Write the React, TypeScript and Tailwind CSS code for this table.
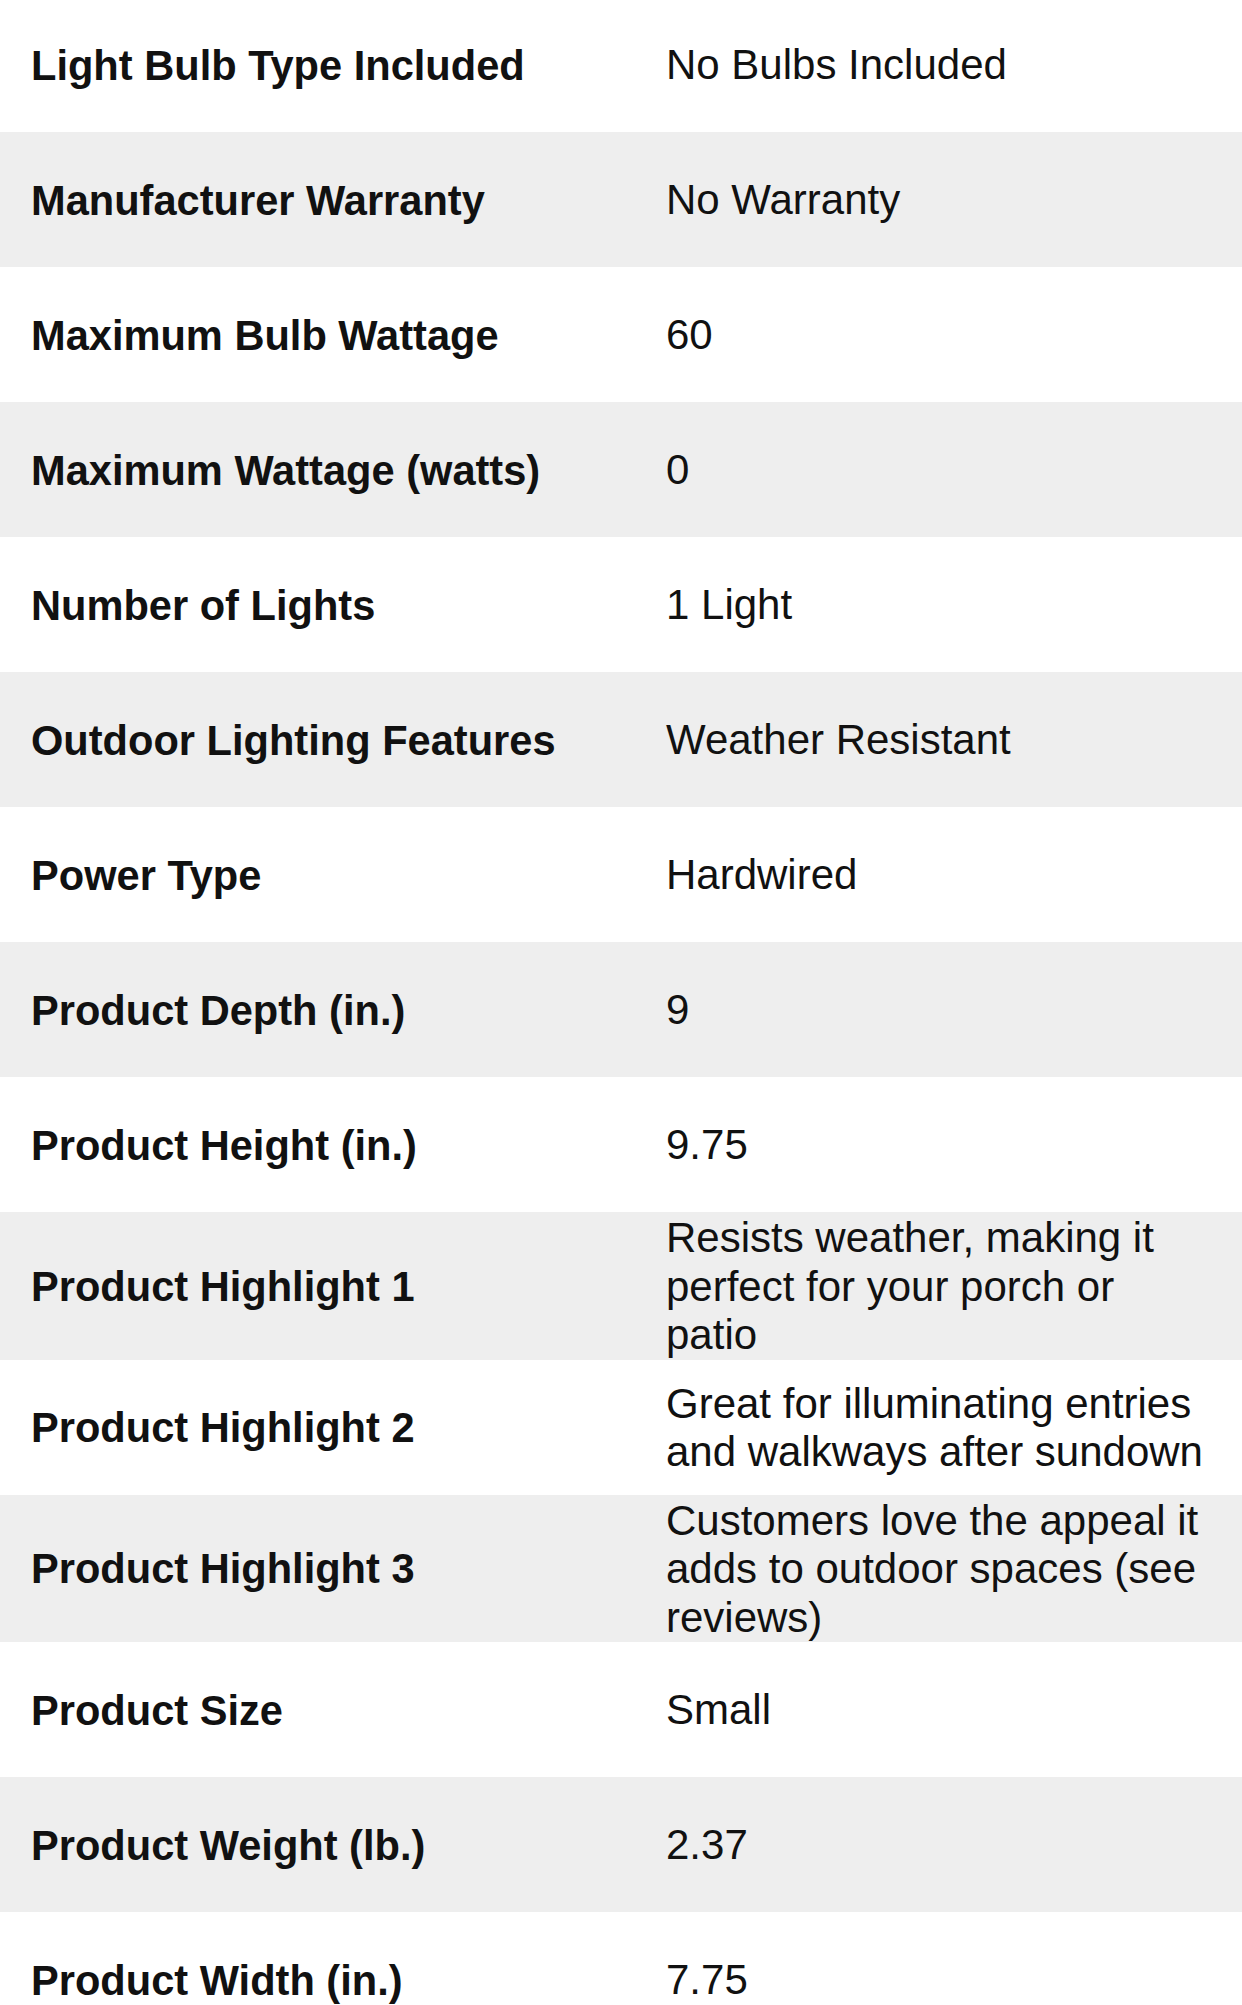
import React from 'react';

interface SpecRow {
  label: string;
  value: string;
}

const specs: SpecRow[] = [
  { label: 'Light Bulb Type Included', value: 'No Bulbs Included' },
  { label: 'Manufacturer Warranty', value: 'No Warranty' },
  { label: 'Maximum Bulb Wattage', value: '60' },
  { label: 'Maximum Wattage (watts)', value: '0' },
  { label: 'Number of Lights', value: '1 Light' },
  { label: 'Outdoor Lighting Features', value: 'Weather Resistant' },
  { label: 'Power Type', value: 'Hardwired' },
  { label: 'Product Depth (in.)', value: '9' },
  { label: 'Product Height (in.)', value: '9.75' },
  { label: 'Product Highlight 1', value: 'Resists weather, making it perfect for your porch or patio' },
  { label: 'Product Highlight 2', value: 'Great for illuminating entries and walkways after sundown' },
  { label: 'Product Highlight 3', value: 'Customers love the appeal it adds to outdoor spaces (see reviews)' },
  { label: 'Product Size', value: 'Small' },
  { label: 'Product Weight (lb.)', value: '2.37' },
  { label: 'Product Width (in.)', value: '7.75' },
];

const SpecRowItem: React.FC<{ row: SpecRow; shaded: boolean }> = ({ row, shaded }) => {
  return (
    <div
      className={`grid grid-cols-[666px_1fr] items-center min-h-[135px] ${shaded ? 'bg-[#eeeeee]' : 'bg-white'}`}
    >
      <div className="pl-[31px] pr-4 pt-[2px] text-[41.6px] leading-[48px] font-bold">{row.label}</div>
      <div className="pr-[30px] pt-[2px] text-[42px] leading-[48.5px] font-normal">{row.value}</div>
    </div>
  );
};

const App: React.FC = () => {
  return (
    <div
      className="w-full bg-white text-[#111] overflow-hidden h-[2005px]"
      style={{ fontFamily: '"Liberation Sans", Arial, Helvetica, sans-serif' }}
    >
      {/* first row is partly scrolled off the top */}
      <div className="-mt-[3px]">
        {specs.map((row, i) => (
          <SpecRowItem key={row.label} row={row} shaded={i % 2 === 1} />
        ))}
      </div>
    </div>
  );
};

export default App;
